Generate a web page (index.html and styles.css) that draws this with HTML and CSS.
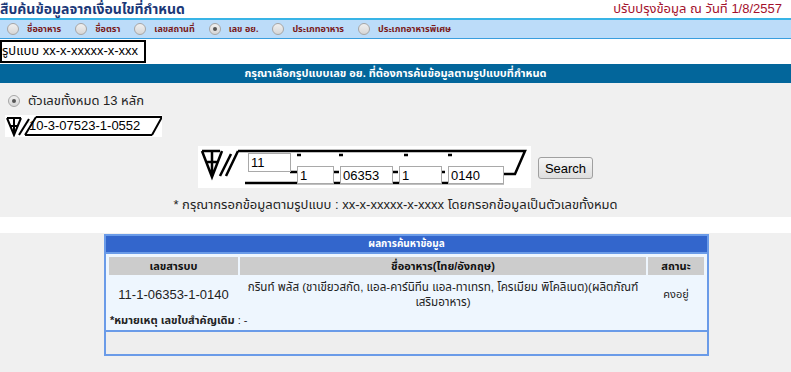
FILE: index.html
```html
<!DOCTYPE html>
<html lang="th">
<head>
    <meta charset="UTF-8">
    <meta name="viewport" content="width=device-width, initial-scale=1.0">
    <title>สืบค้นข้อมูลจากเงื่อนไขที่กำหนด</title>
    <link rel="stylesheet" href="styles.css">
</head>
<body>
    <header class="topbar">
        <h1 class="title">สืบค้นข้อมูลจากเงื่อนไขที่กำหนด</h1>
        <span class="updated">ปรับปรุงข้อมูล ณ วันที่ 1/8/2557</span>
    </header>

    <!-- ตัวเลือกการค้นหา -->
    <div class="menu">
        <label class="menu-item"><input type="radio" name="mode"> ชื่ออาหาร</label>
        <label class="menu-item"><input type="radio" name="mode"> ชื่อตรา</label>
        <label class="menu-item"><input type="radio" name="mode"> เลขสถานที่</label>
        <label class="menu-item"><input type="radio" name="mode" checked> เลข อย.</label>
        <label class="menu-item"><input type="radio" name="mode"> ประเภทอาหาร</label>
        <label class="menu-item"><input type="radio" name="mode"> ประเภทอาหารพิเศษ</label>
    </div>

    <div class="format-box">รูปแบบ xx-x-xxxxx-x-xxx</div>

    <div class="section-head">กรุณาเลือกรูปแบบเลข อย. ที่ต้องการค้นข้อมูลตามรูปแบบที่กำหนด</div>

    <section class="search-panel">
        <label class="option"><input type="radio" name="format" checked> ตัวเลขทั้งหมด 13 หลัก</label>

        <div class="sample">
            <svg class="sample-frame" width="157" height="22" viewBox="0 0 157 22">
                <g stroke="#000" stroke-width="2" fill="none">
                    <path d="M2 3 H16 M2 3 L9 20 L16 3 M9 3 V20 M5 11 H13"/>
                    <path d="M14 20 L24 4"/>
                    <path d="M31 2 H157 L147 20 M20 20 H147 M31 2 L20 20"/>
                </g>
            </svg>
            <span class="sample-num">10-3-07523-1-0552</span>
        </div>

        <form class="search-row" onsubmit="return false;">
            <div class="serial">
                <svg class="serial-frame" width="333" height="42" viewBox="0 0 333 42">
                    <g stroke="#000" stroke-width="2.5" fill="none">
                        <path d="M4 5 H22 M4 5 L14 31 L24 5 M14 5 V31 M8 16 H20"/>
                        <path d="M22 30 L33 8"/>
                        <path d="M40 5 H327 L317 28 H306 M40 5 L28 30"/>
                        <path d="M47 37 H306"/>
                        <path d="M92 26 H100 M135 26 H141 M193 26 H200 M241 26 H247"/>
                        <path d="M99 9 H103 M141 9 H145 M206 9 H210 M250 9 H254"/>
                    </g>
                </svg>
                <input class="part up" type="text" value="11">
                <input class="part w1" type="text" value="1">
                <input class="part w5" type="text" value="06353">
                <input class="part w1b" type="text" value="1">
                <input class="part w4" type="text" value="0140">
            </div>
            <button type="submit" class="btn">Search</button>
        </form>

        <p class="hint">* กรุณากรอกข้อมูลตามรูปแบบ : xx-x-xxxxx-x-xxxx โดยกรอกข้อมูลเป็นตัวเลขทั้งหมด</p>
    </section>

    <div class="spacer"></div>

    <!-- ผลการค้นหา -->
    <section class="result-wrap">
        <div class="result">
            <div class="result-head">ผลการค้นหาข้อมูล</div>
            <table class="grid">
                <tr>
                    <th class="c-no">เลขสารบบ</th>
                    <th class="c-name">ชื่ออาหาร(ไทย/อังกฤษ)</th>
                    <th class="c-status">สถานะ</th>
                </tr>
                <tr>
                    <td class="num">11-1-06353-1-0140</td>
                    <td class="name">กรินท์ พลัส (ชาเขียวสกัด, แอล-คาร์นิทีน แอล-ทาเทรท, โครเมียม พิโคลิเนต)(ผลิตภัณฑ์เสริมอาหาร)</td>
                    <td>คงอยู่</td>
                </tr>
                <tr>
                    <td colspan="3" class="note"><b>*หมายเหตุ เลขใบสำคัญเดิม</b> : -</td>
                </tr>
            </table>
            <div class="result-foot"></div>
        </div>
    </section>
</body>
</html>
```

FILE: styles.css
```css
/* Général */
* {
    margin: 0;
    padding: 0;
    box-sizing: border-box;
}

body {
    font-family: 'Liberation Sans', 'Noto Sans Thai', Tahoma, sans-serif;
    font-size: 13px;
    background-color: #fff;
    color: #000;
}

/* Titre */
.topbar {
    display: flex;
    justify-content: space-between;
    align-items: center;
    height: 20px;
    padding: 0 9px 0 0;
    border-bottom: 2px solid #38b4e6;
}

.title {
    font-size: 14px;
    font-weight: bold;
    color: #1b3878;
}

.updated {
    font-size: 13px;
    color: #a3102c;
}

/* Menu radio */
.menu {
    display: flex;
    align-items: center;
    height: 19px;
    padding-left: 7px;
    background-color: #bcdcf9;
    border-bottom: 1px solid #3a9ede;
}

.menu-item {
    display: flex;
    align-items: center;
    gap: 8px;
    margin-right: 14px;
    font-size: 9px;
    font-weight: bold;
    color: #7a1a1a;
}

input[type="radio"] {
    appearance: none;
    width: 12px;
    height: 12px;
    border-radius: 50%;
    border: 1px solid #a6a6a6;
    background: linear-gradient(#f0f0f0, #d6d6d6);
    position: relative;
}

input[type="radio"]:checked::after {
    content: "";
    position: absolute;
    left: 3px;
    top: 3px;
    width: 4px;
    height: 4px;
    border-radius: 50%;
    background-color: #555;
}

.format-box {
    width: 146px;
    height: 23px;
    margin-top: 1px;
    border: 2px solid #000;
    line-height: 18px;
    font-size: 13px;
    white-space: nowrap;
    overflow: hidden;
}

.section-head {
    height: 19px;
    margin-top: 1px;
    background-color: #03669b;
    color: #fff;
    font-size: 11px;
    font-weight: bold;
    text-align: center;
    line-height: 19px;
}

/* Zone de recherche */
.search-panel {
    background-color: #f0f0f0;
    padding: 8px 0 0;
    height: 134px;
}

.option {
    display: flex;
    align-items: center;
    gap: 8px;
    padding-left: 8px;
    font-size: 13px;
    color: #222;
}

.sample {
    position: relative;
    width: 157px;
    height: 22px;
    margin: 4px 0 0 5px;
    background-color: #fff;
}

.sample-frame {
    position: absolute;
    left: 0;
    top: 0;
}

.sample-num {
    position: relative;
    display: block;
    padding-left: 24px;
    line-height: 22px;
    font-size: 13px;
}

.search-row {
    display: flex;
    justify-content: center;
    align-items: flex-start;
    gap: 7px;
    margin-top: 9px;
}

.serial {
    position: relative;
    display: flex;
    align-items: flex-start;
    gap: 6px;
    width: 333px;
    height: 42px;
    padding: 7px 0 0 50px;
    background-color: #fff;
}

.serial-frame {
    position: absolute;
    left: 0;
    top: 0;
}

.part {
    position: relative;
    height: 18px;
    margin-top: 13px;
    padding: 0 2px;
    border: 1px solid #a9a9a9;
    background-color: #fff;
    font-family: 'Liberation Sans', sans-serif;
    font-size: 13px;
}

.part.up {
    width: 43px;
    height: 19px;
    margin-top: 0;
}

.part.w1 { width: 37px; }
.part.w5 { width: 53px; }
.part.w1b { width: 43px; }
.part.w4 { width: 56px; }

.btn {
    width: 55px;
    height: 22px;
    margin-top: 11px;
    border: 1px solid #a0a0a0;
    border-radius: 3px;
    background: linear-gradient(#f6f6f6, #dedede);
    font-family: 'Liberation Sans', sans-serif;
    font-size: 13px;
    color: #000;
}

.hint {
    margin-top: 7px;
    text-align: center;
    font-size: 13px;
    color: #222;
}

.spacer {
    height: 16px;
}

/* Résultats */
.result-wrap {
    background-color: #f0f0f0;
    padding: 1px 0 20px 104px;
}

.result {
    width: 605px;
    border: 2px solid #6a9be8;
    background-color: #eef6fe;
}

.result-head {
    height: 18px;
    background-color: #3366cc;
    border-bottom: 2px solid #6a9be8;
    color: #fff;
    font-size: 10px;
    font-weight: bold;
    text-align: center;
    line-height: 16px;
}

.grid {
    width: 100%;
    border-spacing: 2px;
    padding: 1px 1px 0;
    font-size: 11px;
    color: #222;
}

.grid th {
    height: 18px;
    background-color: #cccccc;
    font-size: 11px;
    color: #111;
}

.c-no { width: 129px; }
.c-status { width: 56px; }

.grid td {
    padding: 2px 3px;
    text-align: center;
    line-height: 15px;
}

.grid td.num {
    font-size: 13px;
}

.grid td.name {
    font-size: 11.6px;
}

.grid td.note {
    text-align: left;
    padding: 0 1px;
    font-size: 11px;
}

.result-foot {
    height: 24px;
    border-top: 2px solid #6a9be8;
    background-color: #eeeeee;
}
```
